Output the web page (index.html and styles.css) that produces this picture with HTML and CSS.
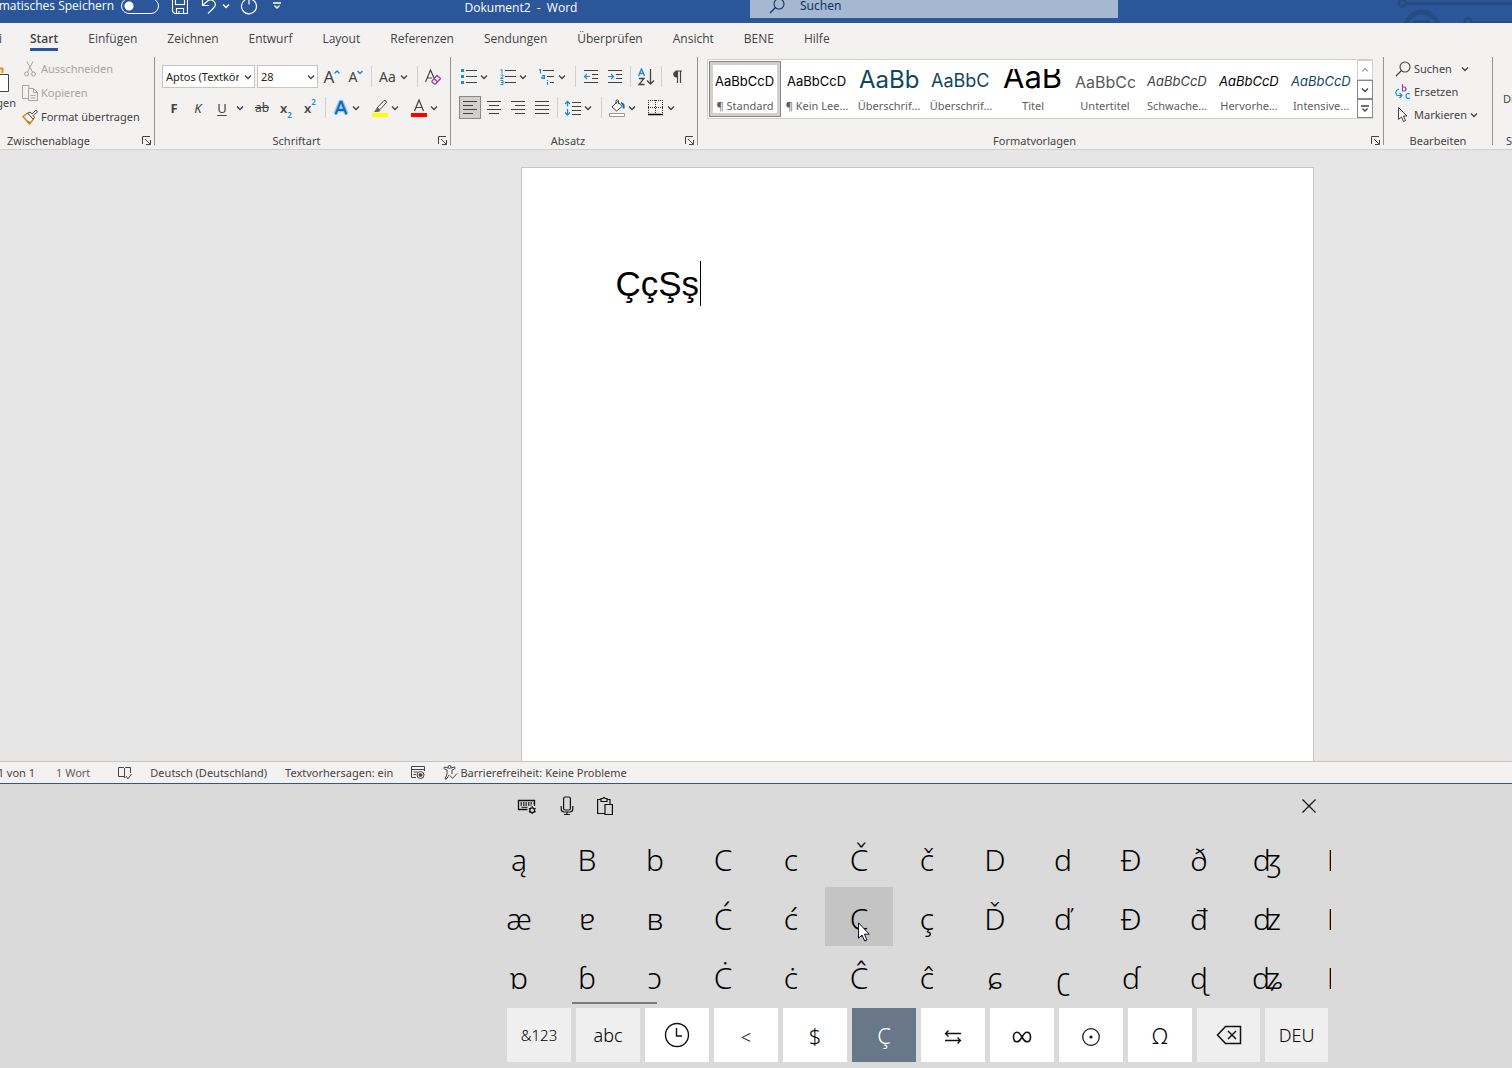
FILE: index.html
```html
<!DOCTYPE html>
<html lang="de">
<head>
<meta charset="utf-8">
<meta name="viewport" content="width=device-width, initial-scale=1">
<title>Dokument2 - Word</title>
<link rel="stylesheet" href="styles.css">
</head>
<body>
<svg class="sprite" aria-hidden="true">
  <symbol id="chev" viewBox="0 0 8 8"><path d="M1 2.500 4 5.500 7 2.500" fill="none" stroke="currentColor" stroke-width="1.400"/></symbol>
  <symbol id="more" viewBox="0 0 8 8"><path d="M0 1h8M1.500 3.500 4 6 6.500 3.500" fill="none" stroke="currentColor" stroke-width="1.300"/></symbol>
  <symbol id="launch" viewBox="0 0 9 9"><path d="M8 .5H.5V8M3 3l5 5M8.500 4v4.500H4" fill="none" stroke="currentColor"/></symbol>
  <symbol id="lens" viewBox="0 0 16 16"><circle cx="10" cy="6" r="5" fill="none" stroke="currentColor" stroke-width="1.100"/><path d="M6.500 9.500 1 15" stroke="currentColor" stroke-width="1.200"/></symbol>
</svg>

<header class="titlebar">
  <div class="quick">
    <label class="autosave" for="autosave"><span>Automatisches Speichern</span></label>
    <input class="toggle" id="autosave" type="checkbox">
    <button class="tb-btn" aria-label="Speichern"><svg width="16" height="16" viewBox="0 0 16 16" fill="none" stroke="currentColor" stroke-width="1.100"><path d="M.5.5h15v15H2.500L.5 13.500zM3.500.5v6h9v-6M4.500 15.500v-5h7v5M7 15v-2"/></svg></button>
    <button class="tb-btn" aria-label="Rückgängig"><svg width="16" height="16" viewBox="0 0 16 16" fill="none" stroke="currentColor" stroke-width="1.200"><path d="M1.500 1v6.500H8M2 7 6.500 3c4-3 9 1 7.500 5-.5 1.500-5 5.500-7 7.500"/></svg></button>
    <button class="tb-btn" aria-label="Weitere Schritte"><svg width="8" height="8"><use href="#chev"/></svg></button>
    <button class="tb-btn" aria-label="Wiederholen"><svg width="18" height="18" viewBox="0 0 18 18" fill="none" stroke="currentColor" stroke-width="1.200"><path d="M12 2.500a7.500 7.500 0 1 1-7 .5M9 7.500V2h5"/></svg></button>
    <button class="tb-btn customize" aria-label="Schnellzugriff anpassen"><svg width="8" height="8"><use href="#more"/></svg></button>
  </div>
  <div class="doc-title">Dokument2&nbsp; -&nbsp; Word</div>
  <div class="search"><svg width="16" height="16"><use href="#lens"/></svg><input type="text" placeholder="Suchen" aria-label="Suchen"></div>
  <svg class="circuit" width="114" height="23" viewBox="0 0 114 23" fill="none" stroke="#264c84" stroke-width="3"><circle cx="4" cy="3" r="3.500"/><path d="M8 3.500h106M15 21.500h17"/><circle cx="24" cy="28" r="16" stroke-width="5"/><circle cx="70" cy="22" r="3.500"/><path d="M74 22.500h40"/></svg>
</header>

<nav class="tabs">
  <span class="tab-clip"><a href="#">Datei</a></span>
  <a class="active" href="#">Start</a><a href="#">Einfügen</a><a href="#">Zeichnen</a><a href="#">Entwurf</a><a href="#">Layout</a><a href="#">Referenzen</a><a href="#">Sendungen</a><a href="#">Überprüfen</a><a href="#">Ansicht</a><a href="#">BENE</a><a href="#">Hilfe</a>
</nav>

<div class="ribbon">
  <section class="group clipboard">
    <div class="body">
      <button class="paste"><svg width="32" height="32" viewBox="0 0 32 32"><path d="M2 7.500h23.500V12M2 7v22h10" fill="none" stroke="#e8912d" stroke-width="2"/><path d="M3 9h21v4H12v15H3z" fill="#fbe0b8"/><path d="M13.500 13.500h18v17h-18z" fill="#fff" stroke="#444"/></svg><span>Einfügen</span></button>
      <div class="stack">
        <button class="line disabled"><svg width="16" height="16" viewBox="0 0 16 16" fill="none" stroke="currentColor"><path d="M5 .5 10.500 11M11 .5 5.500 11"/><circle cx="4.500" cy="13" r="2"/><circle cx="11.500" cy="13" r="2"/></svg>Ausschneiden</button>
        <button class="line disabled"><svg width="16" height="16" viewBox="0 0 16 16" fill="none" stroke="currentColor"><path d="M6 13.500H.5V.5H7v3"/><path d="M6.500 3.500h5l4 4v8h-9zM11.500 3.500v4h4M8.500 10.500h5M8.500 13h5"/></svg>Kopieren</button>
        <button class="line"><svg width="16" height="16" viewBox="0 0 16 16"><path d="M1 7.500 6 4l5.500 6L7.500 15z" fill="#fff" stroke="#e07a10" stroke-width="1.400"/><path d="M3.500 10.500 9 13l-1.500 2z" fill="#e07a10"/><path d="M6 4.500 11 10l1.500-1.500-1.500-2L15.500 3 14 1l-4 4L8 3z" fill="#fff" stroke="#444"/></svg>Format übertragen</button>
      </div>
    </div>
    <div class="caption"><span>Zwischenablage</span><button aria-label="Zwischenablage öffnen"><svg width="9" height="9"><use href="#launch"/></svg></button></div>
  </section>

  <section class="group font">
    <div class="body rows">
      <div class="row">
        <span class="combo family"><select aria-label="Schriftart"><option>Aptos (Textkörper)</option></select><svg width="8" height="8"><use href="#chev"/></svg></span>
        <span class="combo size"><select aria-label="Schriftgrad"><option>28</option></select><svg width="8" height="8"><use href="#chev"/></svg></span>
        <button class="ib grow">A<svg width="6" height="14" viewBox="0 0 6 14"><path d="M.5 3.500 3 1l2.500 2.500" fill="none" stroke="#1e8bcd" stroke-width="1.400"/></svg></button>
        <button class="ib shrink">A<svg width="6" height="14" viewBox="0 0 6 14"><path d="M.5 1 3 3.500 5.500 1" fill="none" stroke="#1e8bcd" stroke-width="1.400"/></svg></button>
        <i class="sep"></i>
        <button class="split case"><b>Aa</b><svg width="8" height="8"><use href="#chev"/></svg></button>
        <i class="sep"></i>
        <button class="ib" aria-label="Formatierung löschen"><svg width="16" height="16" viewBox="0 0 16 16" fill="none"><path d="M.5 13 5.500 1 9 9M2.500 9H7" stroke="#444" stroke-width="1.200"/><path d="m7 12 5-5.500 3.500 3-5 5.500H9.500L7 13zM9 9.500l3.500 3.500" stroke="#a63fb0" stroke-width="1.300"/></svg></button>
      </div>
      <div class="row">
        <button class="ib bold">F</button><button class="ib italic">K</button><button class="ib under">U</button><button class="drop" aria-label="Unterstreichung"><svg width="8" height="8"><use href="#chev"/></svg></button>
        <button class="ib strike">ab</button><button class="ib script">x<sub>2</sub></button><button class="ib script">x<sup>2</sup></button>
        <i class="sep"></i>
        <button class="split" aria-label="Texteffekte"><svg width="20" height="18" viewBox="0 0 20 18"><path d="M4.500 15 9.500 3h1l5 12M6.500 11h7" fill="none" stroke="#8cc6f2" stroke-width="4.500"/><path d="M4.500 15.500 9.500 3h1l5 12.500M6.500 11h7" fill="none" stroke="#1565b0" stroke-width="2"/></svg><svg width="8" height="8"><use href="#chev"/></svg></button>
        <button class="split" aria-label="Hervorheben"><svg width="20" height="18" viewBox="0 0 20 18"><path d="M2 14h16v4H2z" fill="#ff0"/><path d="M7 9 14 1.500q2.500-.5 2.500 2L10 10.500z" fill="#fff" stroke="#444"/><path d="m7 8.500 3.500 3-2 1.500H4z" fill="#666"/></svg><svg width="8" height="8"><use href="#chev"/></svg></button>
        <button class="split" aria-label="Schriftfarbe"><svg width="20" height="18" viewBox="0 0 20 18"><path d="M2 14h16v4H2z" fill="red"/><path d="m5.500 12 4.500-11 4.500 11M7 8.500h6" fill="none" stroke="#444" stroke-width="1.200"/></svg><svg width="8" height="8"><use href="#chev"/></svg></button>
      </div>
    </div>
    <div class="caption"><span>Schriftart</span><button aria-label="Schriftart öffnen"><svg width="9" height="9"><use href="#launch"/></svg></button></div>
  </section>

  <section class="group para">
    <div class="body rows">
      <div class="row">
        <button class="split" aria-label="Aufzählung"><svg width="20" height="16" viewBox="0 0 20 16"><path d="M2 0h3v3H2zM2 6h3v3H2zM2 12h3v3H2z" fill="#1e8bcd"/><path d="M7 1.500h11M7 7.500h11M7 13.500h11" stroke="#444"/></svg><svg width="8" height="8"><use href="#chev"/></svg></button>
        <button class="split" aria-label="Nummerierung"><svg width="20" height="16" viewBox="0 0 20 16"><path d="M2.500 1 4 .5V4.500M2.500 6H5v1.500L2.500 9.500H5.500M2.500 11.500H5v4H2.500M3 13.500h2" fill="none" stroke="#1e8bcd"/><path d="M7 1.500h11M7 7.500h11M7 13.500h11" stroke="#444"/></svg><svg width="8" height="8"><use href="#chev"/></svg></button>
        <button class="split" aria-label="Liste mit mehreren Ebenen"><svg width="20" height="16" viewBox="0 0 20 16"><path d="M2 1 3.500.5V4.500M5 6.500h2.500v3H5v-1.500h2.500M10.500 11v1M10.500 13v3" fill="none" stroke="#1e8bcd" stroke-width="1.200"/><path d="M6 1.500h11M10 7.500h7M13 13.500h4" stroke="#444"/></svg><svg width="8" height="8"><use href="#chev"/></svg></button>
        <i class="sep"></i>
        <button class="ib" aria-label="Einzug verkleinern"><svg width="16" height="16" viewBox="0 0 16 16" fill="none"><path d="M1 1.500h14M9 5.500h6M9 9.500h6M1 13.500h14" stroke="#444"/><path d="M7 7.500H1.500M4 5 1.500 7.500 4 10" stroke="#1e8bcd" stroke-width="1.200"/></svg></button><button class="ib" aria-label="Einzug vergrößern"><svg width="16" height="16" viewBox="0 0 16 16" fill="none"><path d="M1 1.500h14M9 5.500h6M9 9.500h6M1 13.500h14" stroke="#444"/><path d="M1 7.500h5.500M4 5l2.500 2.500L4 10" stroke="#1e8bcd" stroke-width="1.200"/></svg></button>
        <i class="sep"></i>
        <button class="ib" aria-label="Sortieren"><svg width="18" height="18" viewBox="0 0 18 18" fill="none"><path d="M1.500 8 4.500 1l3 7M2.500 5.500h4" stroke="#1e8bcd" stroke-width="1.400"/><path d="M2 10.500h5l-5 6h5.500M13.500 1v15M10 12.500l3.500 3.500 3.500-3.500" stroke="#444" stroke-width="1.300"/></svg></button>
        <i class="sep"></i>
        <button class="ib" aria-label="Absatzmarken"><svg width="12" height="14" viewBox="0 0 12 14"><path d="M7 1H5a3.300 3.300 0 0 0 0 6.500h2z" fill="#444"/><path d="M4.500 1H11M6.500 1v12M9.500 1v12" stroke="#444" stroke-width="1.200"/></svg></button>
      </div>
      <div class="row">
        <div class="aligns">
          <button class="al on" aria-label="Linksbündig"><svg width="14" height="14" viewBox="0 0 14 14"><path d="M0 .5h14M0 4.500h10M0 8.500h14M0 12.500h10" stroke="#444"/></svg></button><button class="al" aria-label="Zentriert"><svg width="14" height="14" viewBox="0 0 14 14"><path d="M0 .5h14M2 4.500h10M0 8.500h14M2 12.500h10" stroke="#444"/></svg></button><button class="al" aria-label="Rechtsbündig"><svg width="14" height="14" viewBox="0 0 14 14"><path d="M0 .5h14M4 4.500h10M0 8.500h14M4 12.500h10" stroke="#444"/></svg></button><button class="al" aria-label="Blocksatz"><svg width="14" height="14" viewBox="0 0 14 14"><path d="M0 .5h14M0 4.500h14M0 8.500h14M0 12.500h14" stroke="#444"/></svg></button>
        </div>
        <i class="sep"></i>
        <button class="split" aria-label="Zeilenabstand"><svg width="20" height="16" viewBox="0 0 20 16" fill="none"><path d="M9 2.500h9M9 6.500h9M9 10.500h9M9 14.500h9" stroke="#444"/><path d="M4.500 1v5.500M2 4l2.500-2.500L7 4M4.500 9v6M2 12.500 4.500 15 7 12.500" stroke="#1e8bcd" stroke-width="1.300"/></svg><svg width="8" height="8"><use href="#chev"/></svg></button>
        <i class="sep"></i>
        <button class="split" aria-label="Schattierung"><svg width="20" height="18" viewBox="0 0 20 18" fill="none"><path d="m5 8 5.500-5.500 4.500 5L9.500 12z" fill="#fff" stroke="#444"/><path d="M9 5V1.500q1.500-1.500 2.500 0V5" stroke="#444"/><path d="M14 4q3.500 1 2.500 5.500" stroke="#1565b0" stroke-width="2"/><path d="M2.500 14.500h15v3h-15z" fill="#fff" stroke="#999"/></svg><svg width="8" height="8"><use href="#chev"/></svg></button>
        <button class="split" aria-label="Rahmen"><svg width="20" height="16" viewBox="0 0 20 16" fill="none"><path d="M2.500 0v14M9.500 0v14M16.500 0v14M2 .5h15M2 7.500h15" stroke="#333" stroke-dasharray="1 1"/><path d="M2 14.500h15" stroke="#000" stroke-width="1.500"/></svg><svg width="8" height="8"><use href="#chev"/></svg></button>
      </div>
    </div>
    <div class="caption"><span>Absatz</span><button aria-label="Absatz öffnen"><svg width="9" height="9"><use href="#launch"/></svg></button></div>
  </section>

  <section class="group styles">
    <div class="body">
      <div class="gallery">
        <div class="tiles">
          <button class="tile on"><span class="pv">AaBbCcD</span><span class="nm">¶ Standard</span></button>
          <button class="tile"><span class="pv">AaBbCcD</span><span class="nm">¶ Kein Lee...</span></button>
          <button class="tile"><span class="pv h1">AaBb</span><span class="nm">Überschrif...</span></button>
          <button class="tile"><span class="pv h2">AaBbC</span><span class="nm">Überschrif...</span></button>
          <button class="tile"><span class="pv title">AaB</span><span class="nm">Titel</span></button>
          <button class="tile"><span class="pv subtitle">AaBbCc</span><span class="nm">Untertitel</span></button>
          <button class="tile"><span class="pv it soft">AaBbCcD</span><span class="nm">Schwache...</span></button>
          <button class="tile"><span class="pv it">AaBbCcD</span><span class="nm">Hervorhe...</span></button>
          <button class="tile"><span class="pv it blue">AaBbCcD</span><span class="nm">Intensive...</span></button>
        </div>
        <div class="scroller">
          <button class="off" aria-label="Nach oben"><svg class="flip" width="8" height="8"><use href="#chev"/></svg></button>
          <button aria-label="Nach unten"><svg width="8" height="8"><use href="#chev"/></svg></button>
          <button aria-label="Mehr"><svg width="8" height="8"><use href="#more"/></svg></button>
        </div>
      </div>
    </div>
    <div class="caption"><span>Formatvorlagen</span><button aria-label="Formatvorlagen öffnen"><svg width="9" height="9"><use href="#launch"/></svg></button></div>
  </section>

  <section class="group edit">
    <div class="body">
      <div class="stack">
        <button class="line"><svg width="16" height="16"><use href="#lens"/></svg>Suchen<svg class="far" width="8" height="8"><use href="#chev"/></svg></button>
        <button class="line"><svg width="16" height="16" viewBox="0 0 16 16" fill="none" stroke-width="1.200"><path d="M7.500 0v7h2.500q2-2 0-4H7.500" stroke="#a63fb0"/><path d="M15 10q-4-1.500-4 2t4 2M4 5Q-1 7 2 11.500h5M4.500 9 7 11.500 4.500 14" stroke="#1e8bcd"/></svg>Ersetzen</button>
        <button class="line"><svg width="16" height="16" viewBox="0 0 16 16" fill="none" stroke="currentColor"><path d="M3.500.5v12l3-2.500 2 4.500 2-1-2-4.500h3.500z"/></svg>Markieren<svg width="8" height="8"><use href="#chev"/></svg></button>
      </div>
    </div>
    <div class="caption"><span>Bearbeiten</span></div>
  </section>

  <section class="group last">
    <div class="body"><button class="dictate">Diktieren</button></div>
    <div class="caption"><span>Sprache</span></div>
  </section>
</div>

<main class="canvas">
  <article class="page"><p>ÇçŞş<span class="caret"></span></p></article>
</main>

<footer class="status">
  <span class="pages"><span>Seite 1 von 1</span></span>
  <span class="words">1 Wort</span>
  <svg width="14" height="14" viewBox="0 0 14 14" fill="none" stroke="#444"><path d="M6.500 2v9.500M6.500 10.500h-6v-9h5l1 1 1-1h5V7M6.500 11.500h1M8 10l2 3 3.500-5"/></svg>
  <span>Deutsch (Deutschland)</span>
  <span>Textvorhersagen: ein</span>
  <svg width="14" height="14" viewBox="0 0 14 14" fill="none" stroke="#444"><path d="M5 11.500H.5V.5h13V5M.5 3.500h13M2.500 6h4M2.500 8.500H5"/><circle cx="9.500" cy="9" r="3.500"/><circle cx="9.500" cy="9" r="1.500" fill="#444"/></svg>
  <span class="access"><svg width="15" height="15" viewBox="0 0 15 15" fill="none" stroke="#444"><circle cx="6.500" cy="2" r="1.500"/><path d="M5 3 1.500 2Q0 3 1.500 4l2.500 1v4l-2 5h1.500L6 10M8 3l3.500-1q1.500 1 0 2L9 5v4M7 10.500l2.500 3 4.500-5"/></svg>Barrierefreiheit: Keine Probleme</span>
</footer>

<section class="keyboard" aria-label="Bildschirmtastatur">
  <div class="kb">
    <div class="kb-top">
      <button aria-label="Einstellungen"><svg width="20" height="18" viewBox="0 0 20 18" fill="none" stroke="#111"><path d="M10.500 12.500H1.500v-9h16V9" stroke-width="1.300"/><path d="M3.500 6h13M3.500 8h11" stroke-dasharray="1.500 1" stroke-width="1.400"/><path d="M4.500 10.300h6"/><circle cx="15.200" cy="13.200" r="2.400" stroke-width="1.300"/><path d="M15.200 9.300v1.500M15.200 15.600v1.500M11.900 11.300l1.300.7M17.300 14.400l1.300.7M11.900 15.100l1.300-.7M17.300 12l1.300-.7" stroke-width="1.300"/></svg></button>
      <button aria-label="Diktat"><svg width="14" height="20" viewBox="0 0 14 20" fill="none" stroke="#111" stroke-width="1.200"><rect x="3.600" y="1" width="6.800" height="13" rx="1.500"/><path d="M1.200 10v3q0 3 3 3h5.600q3 0 3-3v-3M7 16v3M4 18.500h6"/></svg></button>
      <button aria-label="Zwischenablage"><svg width="16" height="20" viewBox="0 0 16 20" fill="none" stroke="#111" stroke-width="1.200"><path d="M8 17.500H.6v-14H4M10 3.500h3V8M4 5.500v-3h2q1-2.500 2 0h2v3z"/><path d="M8 8.500h7.400v10H8z"/></svg></button>
      <button class="close" aria-label="Schließen"><svg width="14" height="14" viewBox="0 0 14 14"><path d="M.5.5l13 13M13.500.5l-13 13" stroke="#111" stroke-width="1.200"/></svg></button>
    </div>
    <div class="chars">
      <div class="char-grid">
        <button>ą</button><button>B</button><button>b</button><button>C</button><button>c</button><button>Č</button><button>č</button><button>D</button><button>d</button><button>Ð</button><button>ð</button><button>ʤ</button><button>E</button>
        <button>æ</button><button>ɐ</button><button>ʙ</button><button>Ć</button><button>ć</button><button class="hover">Ç<svg class="pointer" width="12" height="20" viewBox="0 0 12 20"><path d="M.5.8v15.400l3.500-3.200 2.700 6 2.300-1-2.600-5.800h4.900z" fill="#fff" stroke="#112"/></svg></button><button>ç</button><button>Ď</button><button>ď</button><button>Đ</button><button>đ</button><button>ʣ</button><button>É</button>
        <button>ɒ</button><button>ɓ</button><button>ɔ</button><button>Ċ</button><button>ċ</button><button>Ĉ</button><button>ĉ</button><button>ɕ</button><button>ʗ</button><button>ɗ</button><button>ɖ</button><button>ʥ</button><button>Ė</button>
      </div>
    </div>
    <div class="track"><div class="thumb"></div></div>
    <div class="keys">
      <button class="fn small">&amp;123</button><button class="fn">abc</button>
      <button aria-label="Zuletzt verwendet"><svg width="26" height="26" viewBox="0 0 26 26" fill="none" stroke="#111" stroke-width="1.400"><circle cx="13" cy="13" r="11.500"/><path d="M12.500 6v8H18"/></svg></button>
      <button class="sign">&lt;</button><button class="big">$</button><button class="sel big">Ç</button>
      <button class="sign" aria-label="Pfeile"><svg width="18" height="16" viewBox="0 0 18 16" fill="none" stroke="#111" stroke-width="1.300"><path d="M17 4.500H1.500M4.500 1.500l-3 3 3 3M1 11.500h15.500M13.500 8.500l3 3-3 3"/></svg></button>
      <button class="sign" aria-label="Unendlich"><svg width="20" height="12" viewBox="0 0 20 12" fill="none" stroke="#111" stroke-width="1.600"><path d="M10 6C8 2.500 7 1.200 5 1.200 2.700 1.200 1.500 3.500 1.500 6S2.700 10.800 5 10.800c2 0 3-1.300 5-4.800s3-4.800 5-4.800c2.300 0 3.500 2.300 3.500 4.800s-1.200 4.800-3.500 4.800c-2 0-3-1.300-5-4.800z"/></svg></button>
      <button class="sign" aria-label="Kreis mit Punkt"><svg width="18" height="18" viewBox="0 0 18 18" fill="none" stroke="#111" stroke-width="1.200"><circle cx="9" cy="9" r="8.300"/><circle cx="9" cy="9" r="1" fill="#111"/></svg></button>
      <button class="big">Ω</button>
      <button class="fn" aria-label="Löschen"><svg width="26" height="20" viewBox="0 0 26 20" fill="none" stroke="#111" stroke-width="1.500"><path d="M9.500 1.500H24.500v17H9.500L1.500 10zM12 6l8 8M20 6l-8 8"/></svg></button>
      <button class="fn">DEU</button>
    </div>
  </div>
</section>
</body>
</html>
```
FILE: styles.css
```css
* { box-sizing: border-box; }
body {
  margin: 0;
  min-height: 100vh;
  display: flex;
  flex-direction: column;
  overflow-x: hidden;
  background: #e6e6e6;
  color: #444;
  font: 12px/16px "Noto Sans", "Open Sans", sans-serif;
}
button, input, select { font: inherit; color: inherit; background: none; border: 0; margin: 0; padding: 0; }
a { color: inherit; text-decoration: none; }
svg { flex: none; display: block; }
.sprite { position: absolute; width: 0; height: 0; }

/* Title bar */
.titlebar {
  display: grid;
  grid-template-columns: 292px minmax(0, 458px) 368px 1fr;
  height: 23px;
  overflow: hidden;
  background: #2b579a;
  color: #fff;
}
.quick { display: flex; align-items: center; height: 12px; }
.autosave { width: 114px; display: flex; justify-content: flex-end; white-space: nowrap; overflow: hidden; flex: none; font-family: "Open Sans", "Noto Sans", sans-serif; }
.toggle {
  appearance: none;
  width: 38px;
  height: 16px;
  margin: 0 13px 0 7px;
  border: 1px solid #fff;
  border-radius: 8px;
  background: radial-gradient(circle at 7px 7px, #fff 4px, transparent 5px);
}
.tb-btn { margin-right: 5px; }
.tb-btn:nth-of-type(1) { margin-right: 13px; }
.tb-btn:nth-of-type(3) { margin-right: 10px; }
.tb-btn.customize { margin: 0 0 0 10px; }
.doc-title { text-align: center; font-family: "Open Sans", "Noto Sans", sans-serif; }
.search { display: flex; align-items: center; height: 18px; padding: 0 0 6px 19px; gap: 15px; background: #a4b8d2; color: #12315f; }
.search input { flex: 1; min-width: 0; outline: 0; }
.search input::placeholder { color: #12315f; opacity: 1; }
.circuit { justify-self: end; }

/* Tabs */
.tabs { display: flex; gap: 30px; height: 31px; padding-top: 8px; background: #f3f2f1; white-space: nowrap; font-family: "Open Sans", "Noto Sans", sans-serif; }
.tab-clip { width: 2px; margin-right: -2px; display: flex; justify-content: flex-end; overflow: hidden; }
.tabs a { height: 20px; }
.tabs .active { border-bottom: 3px solid #2b579a; font-weight: 600; }

/* Ribbon */
.ribbon { display: flex; height: 96px; padding: 3px 0 4px; background: #f3f2f1; border-bottom: 1px solid #d2d0ce; overflow: hidden; }
.group { display: flex; flex-direction: column; flex: none; border-right: 1px solid #979593; white-space: nowrap; }
.body { display: flex; height: 79px; flex: none; }
.caption { display: flex; align-items: center; height: 9px; font-size: 11px; }
.caption span { flex: 1; text-align: center; }
.caption button { width: 12px; }
.clipboard { width: 155px; }
.clipboard .caption span { padding-right: 45px; }
.font { width: 296px; }
.para { width: 247px; }
.styles { flex: 1 1 0; min-width: 0; }
.edit { width: 109px; }
.last { width: 19px; border-right: 0; }
.last .caption { padding-left: 13px; }
.dictate { padding: 4px 0 0 10px; font-size: 11px; }
.paste { width: 16px; display: flex; flex-direction: column; align-items: flex-end; gap: 2px; overflow: hidden; padding-top: 4px; font-size: 11px; }
.paste svg { margin-right: 7px; }
.stack { display: flex; flex-direction: column; }
.line { display: flex; align-items: center; gap: 3px; height: 24px; font-size: 11px; }
.clipboard .stack { padding-left: 6px; }
.edit .stack { padding-left: 11px; }
.edit .line { height: 23px; }
.far { margin-left: 6px; }
.disabled { color: #a6a6a6; }

.rows { flex-direction: column; padding: 8px 0 0 7px; gap: 8px; }
.row { display: flex; align-items: center; height: 23px; }
.sep { width: 1px; height: 21px; margin: 0 3px; background: #d2d0ce; }
.ib { width: 24px; height: 23px; display: flex; align-items: center; justify-content: center; flex: none; }
.drop { width: 12px; margin-right: 4px; display: flex; justify-content: center; }
.split { width: 30px; height: 23px; display: flex; align-items: center; justify-content: space-between; margin-right: 9px; padding-right: 1px; flex: none; }
.split:has(+ .sep) { margin-right: 5px; }
.sep + .split { margin-left: 2px; }
.split b { font-weight: 400; font-size: 14px; }
.combo { display: grid; align-items: center; margin-right: 2px; flex: none; }
.combo > * { grid-area: 1 / 1; }
.combo select { appearance: none; height: 23px; width: 100%; padding: 0 15px 0 3px; border: 1px solid #c8c6c4; border-radius: 0; background: #fff; color: #222; font-size: 11px; text-overflow: clip; }
.combo svg { justify-self: end; margin-right: 3px; pointer-events: none; }
.family { width: 93px; }
.size { width: 61px; }
.grow { font-size: 17px; }
.shrink { font-size: 14px; }
.sep + .case { margin-left: 4px; }
.bold { font-weight: 700; font-size: 13px; }
.italic { font-style: italic; font-size: 13px; }
.under { text-decoration: underline; text-underline-offset: 2px; font-size: 13px; }
.strike { text-decoration: line-through; }
.script { font-weight: 600; font-size: 13px; }
.script sub, .script sup { font-size: 8px; line-height: 8px; color: #1e8bcd; }
.script sub { align-self: flex-end; }
.script sup { align-self: flex-start; padding-top: 2px; }
.aligns { display: flex; gap: 2px; margin-right: 1px; }
.para .rows { padding-left: 8px; }
.al { width: 22px; height: 23px; display: grid; place-items: center; }
.al.on { background: #d2d0ce; border: 1px solid #8a8886; }

.gallery { flex: 1; display: flex; height: 60px; margin: 2px 10px 0 9px; border: 1px solid #d2d0ce; background: #fff; min-width: 0; }
.tiles { display: flex; flex: 1; padding: 1px; overflow: hidden; }
.tile { width: 72px; height: 56px; flex: none; display: flex; flex-direction: column; padding: 3px 5px 0; border: 1px solid transparent; }
.tile.on { border-color: #8a8886; box-shadow: inset 0 0 0 3px #d2d0ce; }
.pv { width: 60px; height: 32px; overflow: hidden; text-align: left; color: #000; font: 13px/32px Inter, "Liberation Sans", sans-serif; }
.nm { width: 60px; margin-top: 1px; text-align: center; font-size: 11px; line-height: 16px; color: #605e5c; display: flex; justify-content: center; }
.pv.h1 { font-size: 24px; line-height: 30px; color: #0f4761; }
.pv.h2 { font-size: 18px; color: #0f4761; }
.pv.title { height: 28px; margin-top: 4px; font-size: 31px; line-height: 16px; }
.pv.subtitle { font-size: 16px; line-height: 34px; color: #595959; }
.pv.it { font-style: italic; }
.pv.soft { color: #404040; }
.pv.blue { color: #0f4761; }
.scroller { width: 15px; display: grid; grid-template-rows: 20px 19px 19px; }
.scroller button { display: grid; place-items: center; border: 1px solid #8a8886; margin-right: -1px; }
.scroller .off { border-color: #d2d0ce; color: #a6a6a6; }
.flip { transform: rotate(180deg); }

/* Document */
.canvas { flex: 1; display: flex; justify-content: center; padding: 17px 0 0 322px; }
.page { width: 793px; padding: 93px 94px; background: #fff; border: 1px solid #c8c6c4; border-bottom: 0; color: #000; }
.page p { margin: 0; display: flex; align-items: center; font: 35px/45px "Liberation Sans", Arial, sans-serif; }
.caret { width: 1px; height: 45px; margin-left: 1px; background: #000; }

/* Status bar */
.status { display: flex; align-items: center; gap: 18px; height: 23px; background: #f3f2f1; border-top: 1px solid #c8c6c4; border-bottom: 1px solid #2b579a; font-size: 11px; white-space: nowrap; }
.pages { width: 35px; display: flex; justify-content: flex-end; overflow: hidden; }
.words { margin: 0 10px 0 3px; color: #605e5c; }
.access { display: flex; align-items: center; gap: 2px; }

/* Touch keyboard */
.keyboard { display: flex; justify-content: center; padding-left: 326px; height: 284px; background: #dadada; color: #000; }
.kb { width: 824px; }
.kb-top { display: flex; align-items: center; gap: 23px; height: 44px; padding: 0 15px 0 10px; }
.close { margin-left: auto; }
.chars { height: 174px; overflow: hidden; }
.char-grid { display: grid; grid-template-columns: repeat(13, 68px); grid-auto-rows: 59px; width: 884px; margin-left: -22px; font-size: 30px; line-height: 55px; }
.char-grid button { position: relative; padding-top: 4px; font-weight: 300; }
.hover { background: #c4c4c4; }
.pointer { position: absolute; left: 33px; top: 35px; }
.track { height: 6px; padding-left: 65px; }
.thumb { width: 85px; height: 2px; background: #7a7a7a; }
.keys { display: grid; grid-template-columns: repeat(10, 64fr) repeat(2, 63fr); gap: 5px; height: 54px; padding-right: 3px; font-size: 18px; font-weight: 300; }
.keys button { display: grid; place-items: center; background: #fff; }
.keys .fn { background: #efefef; }
.keys .small { font-size: 15px; }
.keys .big { font-size: 22px; }
.keys .sign { padding-top: 4px; }
.keys .sel { background: #68778a; color: #fff; }
```
